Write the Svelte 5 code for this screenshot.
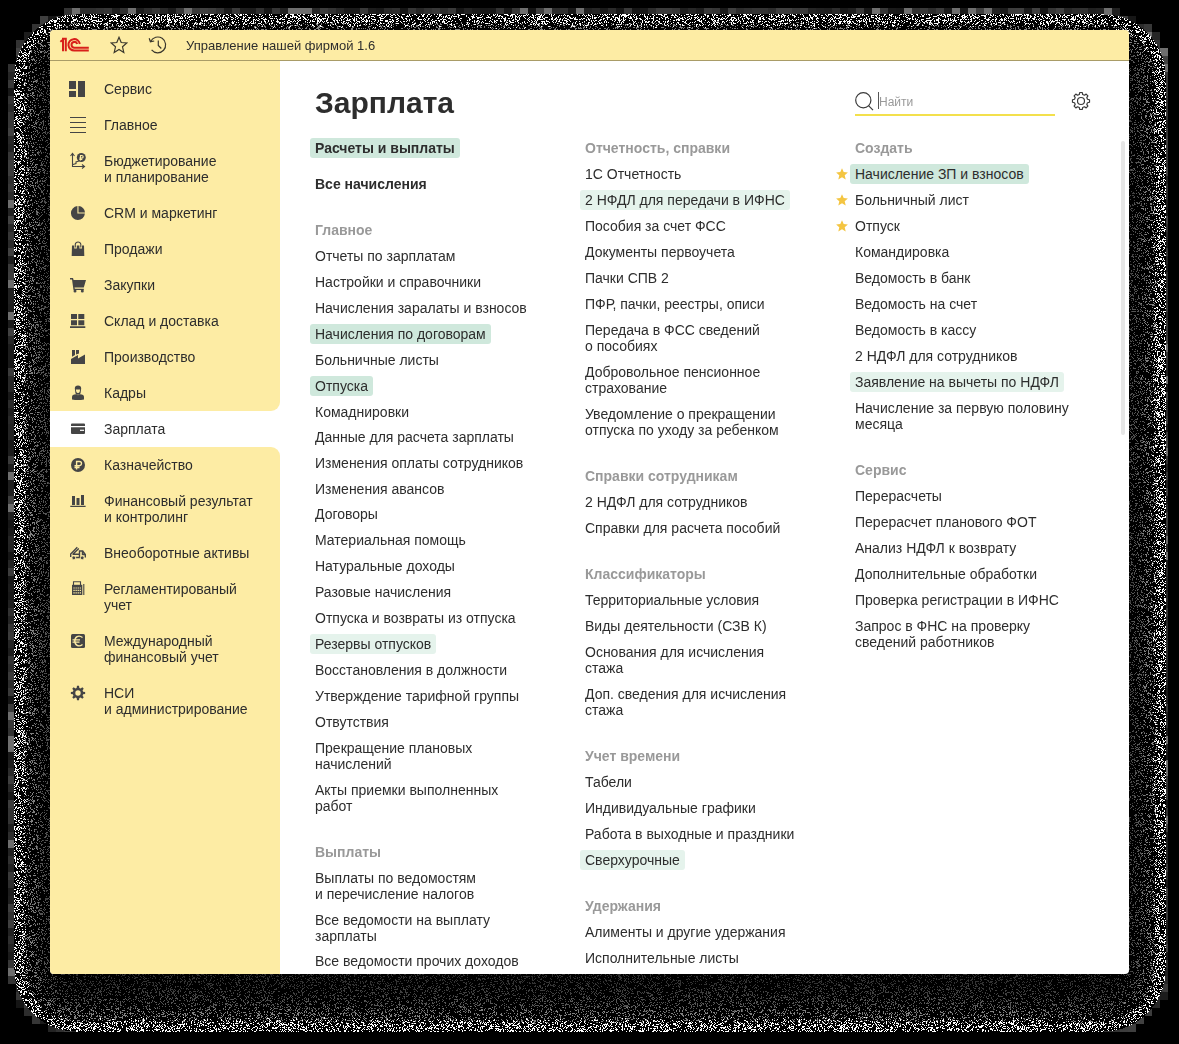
<script>
  import { onMount } from 'svelte';

  const menuTop = [
    ['service', ['Сервис']],
    ['lines', ['Главное']],
    ['budget', ['Бюджетирование', 'и планирование']],
    ['pie', ['CRM и маркетинг']],
    ['bag', ['Продажи']],
    ['cart', ['Закупки']],
    ['boxes', ['Склад и доставка']],
    ['factory', ['Производство']],
    ['person', ['Кадры']]
  ];
  const menuActive = [['card', ['Зарплата']]];
  const menuBottom = [
    ['ruble', ['Казначейство']],
    ['bars', ['Финансовый результат', 'и контролинг']],
    ['truck', ['Внеоборотные активы']],
    ['calc', ['Регламентированый', 'учет']],
    ['euro', ['Международный', 'финансовый учет']],
    ['cog', ['НСИ', 'и администрирование']]
  ];

  // Entry: text with "\n" for a forced break, then style flags.
  const columns = [
    [
      { items: [['Расчеты и выплаты', 'bold strong lead'], ['Все начисления', 'bold']] },
      {
        title: 'Главное',
        items: [
          ['Отчеты по зарплатам'],
          ['Настройки и справочники'],
          ['Начисления заралаты и взносов'],
          ['Начисления по договорам', 'strong'],
          ['Больничные листы'],
          ['Отпуска', 'strong'],
          ['Комаднировки', 'tight'],
          ['Данные для расчета зарплаты'],
          ['Изменения оплаты сотрудников'],
          ['Изменения авансов', 'tight'],
          ['Договоры'],
          ['Материальная помощь'],
          ['Натуральные доходы'],
          ['Разовые начисления'],
          ['Отпуска и возвраты из отпуска'],
          ['Резервы отпусков', 'soft'],
          ['Восстановления в должности'],
          ['Утверждение тарифной группы'],
          ['Отвутствия'],
          ['Прекращение плановых\nначислений'],
          ['Акты приемки выполненных\nработ']
        ]
      },
      {
        title: 'Выплаты',
        items: [
          ['Выплаты по ведомостям\nи перечисление налогов'],
          ['Все ведомости на выплату\nзарплаты', 'tight'],
          ['Все ведомости прочих доходов']
        ]
      }
    ],
    [
      {
        title: 'Отчетность, справки',
        items: [
          ['1С Отчетность'],
          ['2 НФДЛ для передачи в ИФНС', 'soft'],
          ['Пособия за счет ФСС'],
          ['Документы первоучета'],
          ['Пачки СПВ 2'],
          ['ПФР, пачки, реестры, описи'],
          ['Передача в ФСС сведений\nо пособиях'],
          ['Добровольное пенсионное\nстрахование'],
          ['Уведомление о прекращении\nотпуска по уходу за ребенком']
        ]
      },
      { title: 'Справки сотрудникам', items: [['2 НДФЛ для сотрудников'], ['Справки для расчета пособий']] },
      {
        title: 'Классификаторы',
        items: [
          ['Территориальные условия'],
          ['Виды деятельности (СЗВ К)'],
          ['Основания для исчисления\nстажа'],
          ['Доп. сведения для исчисления\nстажа']
        ]
      },
      {
        title: 'Учет времени',
        items: [['Табели'], ['Индивидуальные графики'], ['Работа в выходные и праздники'], ['Сверхурочные', 'soft']]
      },
      { title: 'Удержания', items: [['Алименты и другие удержания'], ['Исполнительные листы']] }
    ],
    [
      {
        title: 'Создать',
        items: [
          ['Начисление ЗП и взносов', 'strong star'],
          ['Больничный лист', 'star'],
          ['Отпуск', 'star'],
          ['Командировка'],
          ['Ведомость в банк'],
          ['Ведомость на счет'],
          ['Ведомость в кассу'],
          ['2 НДФЛ для сотрудников'],
          ['Заявление на вычеты по НДФЛ', 'soft'],
          ['Начисление за первую половину\nмесяца']
        ]
      },
      {
        title: 'Сервис',
        items: [
          ['Перерасчеты'],
          ['Перерасчет планового ФОТ'],
          ['Анализ НДФЛ к возврату'],
          ['Дополнительные обработки'],
          ['Проверка регистрации в ИФНС'],
          ['Запрос в ФНС на проверку\nсведений работников']
        ]
      }
    ]
  ];

  function gearPath(cx, cy, outer, inner, teeth) {
    const pts = [];
    for (let i = 0; i < teeth; i++) {
      const a = (i / teeth) * Math.PI * 2;
      const s = Math.PI / teeth;
      for (const [r, o] of [[inner, -0.66], [outer, -0.36], [outer, 0.36], [inner, 0.66]]) {
        pts.push(`${(cx + r * Math.sin(a + o * s)).toFixed(2)} ${(cy - r * Math.cos(a + o * s)).toFixed(2)}`);
      }
    }
    return 'M' + pts.join('L') + 'Z';
  }
  const cogSolid = gearPath(8, 8, 7.2, 5.3, 8);
  const cogLine = gearPath(10, 10, 8.6, 6.7, 8);

  let canvas;

  // Speckled shadow: dots get darker the deeper they lie under the window.
  onMount(() => {
    const W = 1179, H = 1044;
    const ctx = canvas.getContext('2d');
    const img = ctx.createImageData(W, H);
    let seed = 12345;
    const rnd = () => {
      seed = (seed + 0x6d2b79f5) | 0;
      let t = Math.imul(seed ^ (seed >>> 15), 1 | seed);
      t = (t + Math.imul(t ^ (t >>> 7), 61 | t)) ^ t;
      return ((t ^ (t >>> 14)) >>> 0) / 4294967296;
    };
    const depth = (x, y) => {
      const r = 62, l = 14, t = 14, rt = 1165, b = 1031;
      const qx = Math.max(l + r - x, x - rt + r);
      const qy = Math.max(t + r - y, y - b + r);
      const out = Math.hypot(Math.max(qx, 0), Math.max(qy, 0)) + Math.min(Math.max(qx, qy), 0);
      return r - out;
    };
    const blocks = new Map();
    for (let by = 0; by < H; by += 8) {
      for (let bx = 0; bx < W; bx += 8) {
        let touches = false;
        for (const [x, y] of [[0, 0], [7, 0], [0, 7], [7, 7]]) {
          if (depth(bx + x, by + y) >= 0) touches = true;
        }
        const k = rnd();
        blocks.set(by * W + bx, touches ? (k > 0.92 ? 110 : 20 + k * 50) : 0);
      }
    }
    for (let y = 0; y < H; y++) {
      for (let x = 0; x < W; x++) {
        const d = depth(x, y);
        let v = 0;
        if (d < 0) {
          v = blocks.get((y - (y % 8)) * W + (x - (x % 8)));
        } else if (d < 62 && rnd() < (d < 12 ? 0.32 : 0.23)) {
          v = 255 / Math.max(1, Math.round(0.55 + (d + (rnd() - 0.5) * 8) / 11));
        }
        const i = (y * W + x) * 4;
        img.data[i] = img.data[i + 1] = img.data[i + 2] = v;
        img.data[i + 3] = 255;
      }
    }
    ctx.putImageData(img, 0, 0);
  });
</script>

{#snippet icon(name)}
  <svg class="icon" viewBox="0 0 16 16" width="16" height="16">
    {#if name === 'service'}
      <path d="M-1 0h7v8h-7zM-1 10h7v6h-7zM8 0h7v16H8z" />
    {:else if name === 'lines'}
      <path d="M0 .5h16M0 5.500h16M0 10.500h16M0 15.500h16" class="line" />
    {:else if name === 'budget'}
      <path d="M2.500 1v12.500H14M.5 3l2-2.500 2 2.500M12 11.500l2.500 2-2.500 2M3 11.500l3-1V9l3-1" class="line" />
      <circle cx="11.300" cy="4.500" r="4.500" />
      <path d="M10.500 7.500V2.500h1.300a1.300 1.300 0 0 1 0 2.700H9.300M9.300 6.500h3" class="cut" />
    {:else if name === 'pie'}
      <path d="M7.400 1.100a7 7 0 1 0 7.500 7.500H7.400z" />
      <path d="M8.500 1a7 7 0 0 1 6.500 6.500H8.500z" />
    {:else if name === 'bag'}
      <path d="M2 4.500h12l.3 10.500H1.700z" />
      <path d="M5.500 7.500V3.500a2.600 2.600 0 0 1 5.200 0V7.500" class="cut wide" />
      <path d="M5.300 6.500V3.200a2.800 2.800 0 0 1 5.500 0V6.500" class="line" />
    {:else if name === 'cart'}
      <path d="M0 1h3l.6 2H16l-2.200 7.500H4.500l.3 1.200h9V13H3.500L2 2.500H0z" />
      <circle cx="5" cy="14" r="1.500" /><circle cx="12.300" cy="14" r="1.500" />
    {:else if name === 'boxes'}
      <path d="M1 1h6v5H1zM8.300 1h6V6h-6zM1 7.200h6v5H1zM8.300 7.200h6v5h-6zM0 13.200h15.300V15H0z" />
    {:else if name === 'factory'}
      <path d="M1 10l7-4v3.500L15 5.500V15H1zM2 1h3v5L2 7.800zM6 1h3v3.500L6 5.600z" />
    {:else if name === 'person'}
      <path d="M4.800 3.500a3.200 3 0 0 1 6.400 0L10.700 7a2.700 2.700 0 0 1-5.400 0zM2 14.500V12q0-2.500 4-2.700l2 1 2-1q4 .2 4 2.700v2.500q-6 1-12 0z" />
      <path d="M5.800 4.400l4.300.1-.4 2.300a1.800 1.800 0 0 1-3.400 0z" class="hole" />
    {:else if name === 'card'}
      <path d="M1 3.500q0-1 1-1h12q1 0 1 1V5H1zM1 6.200h14v5.900q0 1-1 1H2q-1 0-1-1z" />
      <path d="M10 9.300h4" class="cut" />
    {:else if name === 'ruble'}
      <circle cx="8" cy="8" r="7" />
      <path d="M6.600 12.500V4.500h2.800a2.100 2.100 0 0 1 0 4.200H4.500M4.500 10.500h5" class="cut euro" />
    {:else if name === 'bars'}
      <path d="M2 3h3v9H2zM6.500 5h3v7h-3zM11 2h3v10h-3zM.3 12.800h15.300v1.300H.3z" />
    {:else if name === 'truck'}
      <path d="M.7 12V9L7.300 2.300M2.800 9.200L8.800 3.500M2.500 9.200H9M9.500 12.500v-6.500h3.200l2.600 3.500v3M6 12.500h4M12.500 6.500v3h2.500" class="line thick" />
      <circle cx="3.800" cy="12.800" r="1.900" class="wheel" /><circle cx="12.200" cy="12.800" r="1.900" class="wheel" />
    {:else if name === 'calc'}
      <path d="M3.500 4V.8h7V4" class="line" />
      <path d="M2 3.800h10.300V14H2z" /><path d="M13.800 3V14" class="line" />
      <path d="M3.400 7h7.600M3.400 9.400h7.600M3.400 11.800h7.600" class="cut dots" />
    {:else if name === 'euro'}
      <rect x="1" y="1" width="14" height="14" rx="1.500" />
      <path d="M12.500 4.500C8.500 1.500 4.800 4 4.800 8s3.700 6.500 7.700 3.500M2.500 6.900h7.500M2.500 9.100h7" class="cut euro" />
    {:else if name === 'cog'}
      <path d={cogSolid} /><circle cx="8" cy="8" r="2.700" class="hole" />
    {/if}
  </svg>
{/snippet}

{#snippet group(list, kind)}
  <ul class="group {kind}">
    {#each list as [name, lines]}
      <li>
        {@render icon(name)}
        <span>{#each lines as l}<span class="row">{l}</span>{/each}</span>
      </li>
    {/each}
  </ul>
{/snippet}

<div class="stage">
  <canvas bind:this={canvas} width="1179" height="1044"></canvas>
  <div class="window">
    <header>
      <svg class="logo" width="30" height="16" viewBox="0 0 30 16">
        <path d="M.3 4.800L3 2.800V14.300M2 1.700h3.800V14.300" />
        <path d="M19.800 7A5.700 5.700 0 1 0 14.500 13.500H28.800" />
        <path d="M17.200 7A2.900 2.900 0 1 0 14.500 10.700H28.800" />
      </svg>
      <svg class="tool" width="18" height="18" viewBox="0 0 18 18">
        <path d="M9 1.200l2.200 5.300 5.600.5-4.300 3.800 1.300 5.600L9 13.500l-4.800 2.900 1.300-5.600L1.200 7l5.600-.5z" />
      </svg>
      <svg class="tool" width="20" height="18" viewBox="0 0 20 18">
        <path d="M2.600 5.500A7.900 7.900 0 1 1 3.600 13.900M1.200 2.300l1.200 3.500 3.800-.8M10.300 4.500V9.500l3 3" />
      </svg>
      <span class="app-name">Управление нашей фирмой 1.6</span>
    </header>
    <div class="body">
      <nav>
        {@render group(menuTop, 'top')}
        {@render group(menuActive, 'active')}
        {@render group(menuBottom, 'bottom')}
      </nav>
      <main>
        <div class="head">
          <h1>Зарплата</h1>
          <div class="search">
            <svg width="20" height="20" viewBox="0 0 20 20">
              <circle cx="8.300" cy="9.300" r="7.600" /><path d="M13.500 14.700l4.500 4.500" />
            </svg>
            <i class="caret"></i><span>Найти</span>
          </div>
          <svg class="settings" width="20" height="20" viewBox="0 0 20 20">
            <path d={cogLine} /><circle cx="10" cy="10" r="3.500" />
          </svg>
        </div>
        <div class="columns">
          {#each columns as sections}
            <div class="column">
              {#each sections as s}
                <section>
                  {#if s.title}<h2>{s.title}</h2>{/if}
                  {#each s.items as [text, flags = '']}
                    <div class="entry {flags}">
                      {#if flags.includes('star')}
                        <svg class="fav" width="12" height="12" viewBox="0 0 12 12">
                          <path d="M6 .2l1.700 3.900 4.200.3-3.200 2.800 1 4.200L6 9.200l-3.700 2.200 1-4.200L.1 4.400l4.200-.3z" />
                        </svg>
                      {/if}
                      <span class="label">{text}</span>
                    </div>
                  {/each}
                </section>
              {/each}
            </div>
          {/each}
        </div>
        <div class="scrollbar"></div>
      </main>
    </div>
  </div>
</div>

<style>
  :global(body) { background: #000; overflow: hidden; }
  .stage {
    position: relative;
    box-sizing: border-box;
    width: 1179px;
    height: 1044px;
    padding: 30px 50px 70px;
    font: 14px/16px "Liberation Sans", Arial, sans-serif;
    color: #2d2d2d;
  }
  canvas { position: absolute; inset: 0; }
  .window {
    position: relative;
    display: flex;
    flex-direction: column;
    width: 1079px;
    height: 944px;
    overflow: hidden;
    border-radius: 4px;
    background: #fff;
  }
  header {
    display: flex;
    align-items: center;
    box-sizing: border-box;
    flex: none;
    height: 31px;
    padding-left: 10px;
    border-bottom: 1px solid #a99c67;
    background: #fdeca4;
  }
  svg { flex: none; display: block; overflow: visible; }
  .logo { fill: none; stroke: #d8201a; stroke-width: 2; }
  .tool { fill: none; stroke: #3b382d; stroke-width: 1.200; margin-left: 20px; }
  .app-name { margin-left: 18px; padding-top: 2px; font-size: 13px; }
  .body { display: flex; flex: 1; min-height: 0; }
  nav { display: flex; flex-direction: column; width: 230px; flex: none; }
  ul { margin: 0; padding: 0; list-style: none; background: #fdeca4; }
  .top { padding-top: 10px; border-bottom-right-radius: 9px; }
  .active { background: #fff; }
  .bottom { flex: 1; border-top-right-radius: 9px; }
  li { display: flex; gap: 18px; padding: 10px 0 10px 20px; }
  .row { display: block; white-space: nowrap; }
  .icon { fill: #454545; --bg: #fdeca4; }
  .active .icon { --bg: #fff; }
  .line { fill: none; stroke: #454545; stroke-width: 1.100; }
  .thick { stroke-width: 1.400; }
  .cut { fill: none; stroke: var(--bg); stroke-width: 1.200; }
  .wide { stroke-width: 2.600; }
  .euro { stroke-width: 1.400; }
  .dots { stroke-dasharray: 1.300 0.800; }
  .hole { fill: var(--bg); }
  .wheel { stroke: var(--bg); stroke-width: 0.800; }
  main { position: relative; flex: 1; min-width: 0; padding-left: 35px; }
  .head { display: flex; height: 77px; }
  h1 { margin: 24px 0 0; width: 540px; font-size: 30px; line-height: 36px; }
  .search {
    display: flex;
    align-items: center;
    box-sizing: border-box;
    width: 200px;
    height: 29px;
    margin-top: 26px;
    border-bottom: 2px solid #f3e04c;
    font-size: 12px;
    color: #999;
  }
  .search span { padding-top: 2px; }
  .search svg, .settings { fill: none; stroke: #3a3a3a; stroke-width: 1.200; stroke-linejoin: round; }
  .caret { width: 1px; height: 17px; margin-left: 3px; background: #555; }
  .settings { margin: 30px 0 0 16px; }
  .columns { display: flex; }
  .column { display: flex; flex-direction: column; gap: 20px; width: 270px; flex: none; }
  h2 { margin: 0 0 6px; padding: 2px 0; font-size: 14px; line-height: 16px; color: #999; }
  .entry { display: flex; position: relative; padding-bottom: 6px; margin-left: -5px; }
  .lead { padding-bottom: 16px; }
  .tight { padding-bottom: 5px; }
  .label { padding: 2px 5px; border-radius: 3px; white-space: pre; }
  .bold { font-weight: bold; }
  .strong .label { background: #cfe8dc; }
  .soft .label { background: #e5f3ec; }
  .fav { position: absolute; left: -14px; top: 4px; fill: #f4c542; }
  .scrollbar {
    position: absolute;
    right: 4px;
    top: 80px;
    width: 4px;
    height: 294px;
    border-radius: 2px;
    background: #e6e6e6;
  }
</style>
